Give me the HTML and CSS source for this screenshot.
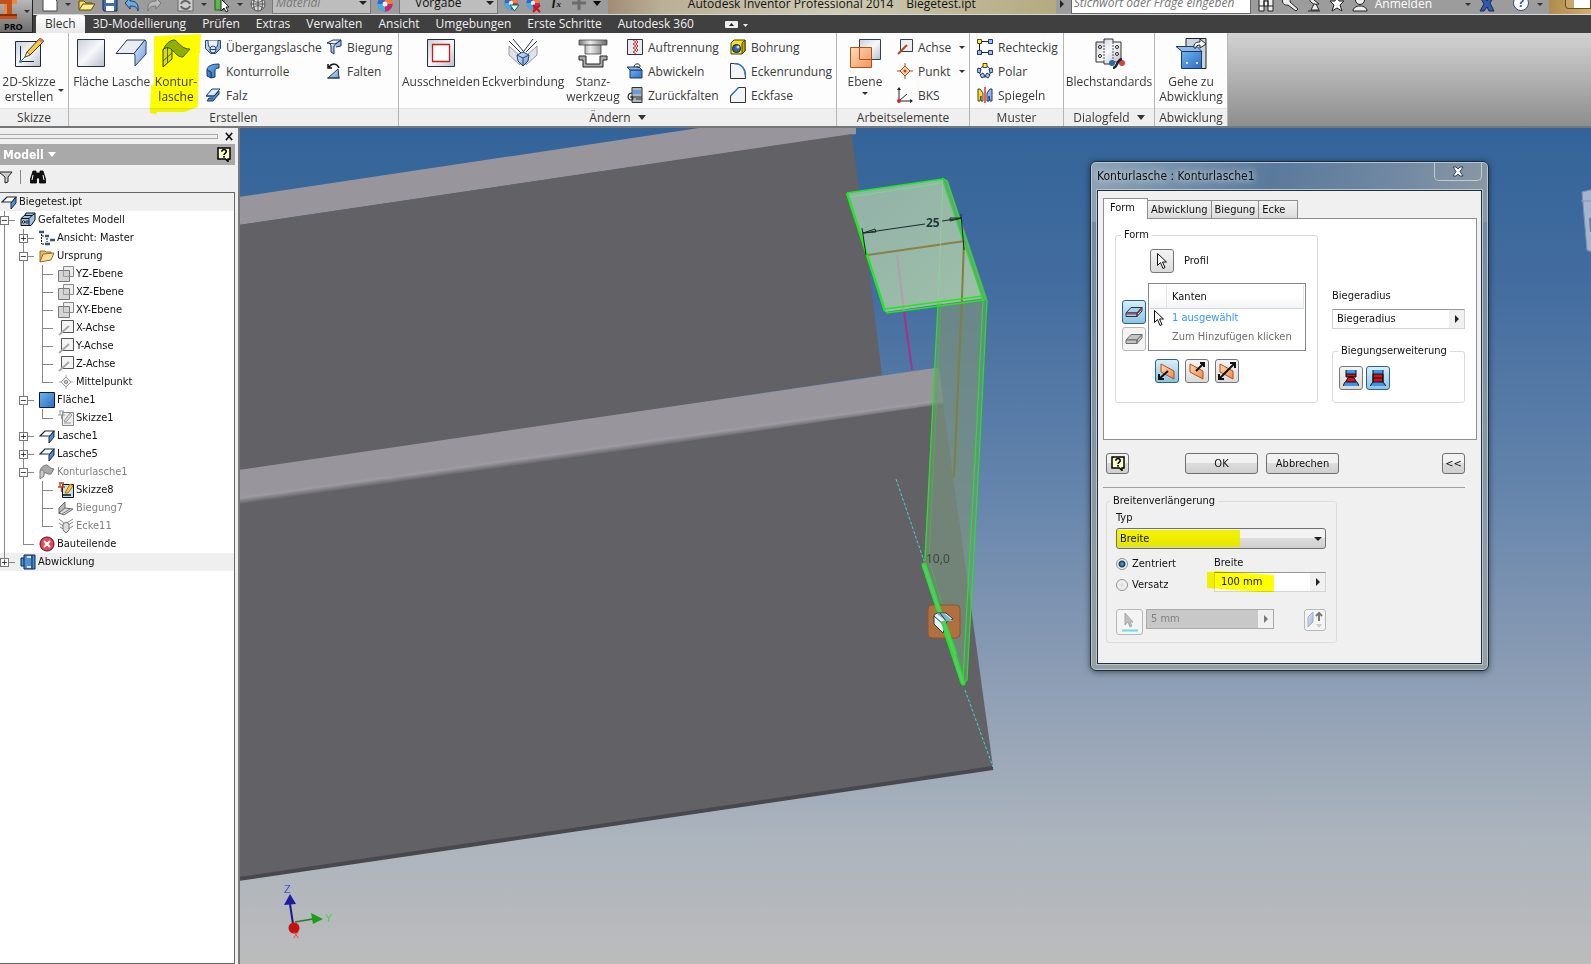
FILE: index.html
```html
<!DOCTYPE html>
<html lang="de">
<head>
  <meta charset="UTF-8">
  <meta name="viewport" content="width=device-width, initial-scale=1.0">
  <title>Autodesk Inventor Professional 2014 - Biegetest.ipt</title>
  <link rel="stylesheet" href="styles.css">
</head>
<body>
  <!-- shared icons -->
  <svg class="sprite" aria-hidden="true">
    <defs>
      <linearGradient id="steel" x1="0" y1="0" x2="1" y2="1"><stop offset="0" stop-color="#c9ced8"/><stop offset=".5" stop-color="#f6f8fa"/><stop offset="1" stop-color="#b9bfca"/></linearGradient>
      <linearGradient id="blue" x1="0" y1="0" x2="1" y2="1"><stop offset="0" stop-color="#dcebfa"/><stop offset="1" stop-color="#6d9ad6"/></linearGradient>
      <linearGradient id="deep" x1="0" y1="0" x2="1" y2="1"><stop offset="0" stop-color="#6db4ee"/><stop offset="1" stop-color="#2f6cc0"/></linearGradient>
      <linearGradient id="orange" x1="0" y1="0" x2="1" y2="1"><stop offset="0" stop-color="#fcd9b8"/><stop offset="1" stop-color="#f08a48"/></linearGradient>
      <linearGradient id="punch" x1="0" x2="1"><stop offset="0" stop-color="#777"/><stop offset=".4" stop-color="#eee"/><stop offset="1" stop-color="#666"/></linearGradient>
    </defs>
    <symbol id="i-flange" viewBox="0 0 16 16"><path d="M1 8 6 3h9l-4 5z" fill="#fff" stroke="#1b2940" stroke-width="1.2"/><path d="M11 8l4-5v6l-5 6V9z" fill="url(#deep)" stroke="#1b2940"/></symbol>
    <symbol id="i-plane" viewBox="0 0 16 16"><path d="M5.500 .5h10v10h-10z" fill="#eee" stroke="#888"/><path d="M.5 4.500h11v11H.5z" fill="#ccc" fill-opacity=".8" stroke="#777"/><path d="M5.500 4.500v6h6" fill="none" stroke="#999"/></symbol>
    <symbol id="i-axis" viewBox="0 0 16 16"><path d="M3.500 .5h12v12h-12z" fill="#f4f4f4" stroke="#555"/><path d="M1 15 11 6" stroke="#aaa" stroke-width="2"/></symbol>
    <symbol id="i-cursor" viewBox="0 0 12 18"><path d="M1.500 1.500v12l3-3 2.500 6 2-1-2.500-5.500h4z" fill="#fff" stroke="#111"/></symbol>
    <symbol id="i-help" viewBox="0 0 14 15"><path d="M1 1h12v11h-2v2.500L8.500 12H1z" fill="#ffffc8" stroke="#000" stroke-width="1.500"/><path d="M4.800 4.700c0-3 4.600-2.700 4.400 0C9.100 6.300 7 6.300 7 8M7 9v1.700" fill="none" stroke="#000" stroke-width="1.600"/></symbol>
    <symbol id="i-wheel" viewBox="0 0 16 16"><circle cx="8" cy="8" r="7.500" fill="#3a63c8"/><path d="M8 8V.5A7.500 7.500 0 0 1 15.500 8z" fill="#f08030"/><path d="M8 8h7.500A7.500 7.500 0 0 1 8 15.500z" fill="#d02070"/><path d="M8 8v7.500A7.500 7.500 0 0 1 .5 8z" fill="#3fb0e0"/><circle cx="8" cy="8" r="2.500" fill="#eee"/></symbol>
    <symbol id="i-slab" viewBox="0 0 18 12"><path d="M1 7 6 1.500h11L12 7z" fill="currentColor" stroke="#333"/><path d="M1 7v3.500h11V7zM12 10.500 17 5V1.500L12 7z" fill="currentColor" stroke="#333"/></symbol>
    <symbol id="i-binoc" viewBox="0 0 16 14"><path d="M3 1h3v2h4V1h3l2.500 8v4H9.500V8h-3v5h-6V9z" fill="currentColor" stroke="#000" stroke-width=".8"/><path d="M3 5 2 10M13 5l1 5" stroke="#fff"/></symbol>
  </svg>

  <header class="head">
    <button class="app" aria-label="Inventor PRO">
      <svg width="24" height="22" viewBox="0 0 24 22"><path d="M0 0h17v4h-5v10h5v5H0v-5h4V4H0z" fill="#c4511c"/><path d="M4 4h3v10H4zM12 0h5v4h-5z" fill="#e88a45"/><path d="M0 14h17v2H0z" fill="#8a3008"/></svg>
      <span>PRO</span><i class="tri"></i>
    </button>
    <div class="quick">
      <div class="quick-tools">
        <button aria-label="Neu"><svg width="16" height="18" viewBox="0 0 16 18"><path d="M1 1h10l4 4v10H1z" fill="#fff" stroke="#444"/></svg></button><i class="tri"></i>
        <button aria-label="Öffnen"><svg width="18" height="18" viewBox="0 0 18 18"><path d="M1 13V5h5l2 2h6v3" fill="#f9dd6a" stroke="#5e4a00"/><path d="m1 14 4-6h12l-4 6z" fill="#fff28a" stroke="#5e4a00"/></svg></button>
        <button aria-label="Speichern"><svg width="16" height="18" viewBox="0 0 16 18"><path d="M1 2h14v13H2l-1-1z" fill="#3f6ea8" stroke="#14284a"/><path d="M4 2h8v5H4zM4 10h8v5H4z" fill="#fff"/></svg></button>
        <button aria-label="Rückgängig"><svg width="16" height="18" viewBox="0 0 16 18"><path d="m1 7 5-5v3c6 0 9 3 8 10-1-4-3-5-8-5v3z" fill="#6fa8e6" stroke="#173d70"/></svg></button>
        <button aria-label="Wiederholen"><svg width="16" height="18" viewBox="0 0 16 18"><path d="m15 7-5-5v3C4 5 1 8 2 15c1-4 3-5 8-5v3z" fill="#b9b9b9" stroke="#777"/></svg></button>
        <button class="far" aria-label="Aktualisieren"><svg width="17" height="18" viewBox="0 0 17 18"><path d="M1 3h15v12H1z" fill="#ccc" stroke="#666"/><path d="M4 8c2-5 8-3 9 0M13 10c-2 5-8 3-9 0" fill="none" stroke="#666" stroke-width="2"/></svg></button><i class="tri"></i>
        <button aria-label="Auswählen"><svg width="16" height="18" viewBox="0 0 16 18"><path d="M1 1h9v13H1z" fill="#62b54e" stroke="#1e5c14"/><path d="M7 3v12l3-3 2 4 2-1-2-4h3z" fill="#fff" stroke="#222"/></svg></button><i class="tri"></i>
        <button aria-label="Darstellung"><svg width="16" height="18" viewBox="0 0 16 18"><circle cx="8" cy="8" r="7" fill="#d8d8d8" stroke="#555"/><path d="M1 8h14M8 1v14M3 4c3 3 7 3 10 0M3 12c3-3 7-3 10 0M5 2c-2 4-2 8 0 12M11 2c2 4 2 8 0 12" fill="none" stroke="#555"/></svg></button>
        <span class="combo w100"><select aria-label="Material" class="italic"><option>Material</option></select></span>
        <button aria-label="Farbrad"><svg width="16" height="18" viewBox="0 0 16 18"><use href="#i-wheel" width="16" height="16"/></svg></button>
        <span class="combo w100"><select aria-label="Darstellungsvorgabe"><option>Vorgabe</option></select></span>
        <button aria-label="Anpassen"><svg width="16" height="18" viewBox="0 0 16 18"><use href="#i-wheel" width="14" height="14"/><path d="M6 9h9l-4.500 6z" fill="#cff" stroke="#067"/></svg></button>
        <button aria-label="Löschen"><svg width="16" height="18" viewBox="0 0 16 18"><use href="#i-wheel" width="14" height="14"/><path d="m7 9 7 7m0-7-7 7" stroke="#c11" stroke-width="2"/></svg></button>
        <button class="fx">f<sub>x</sub></button>
        <button aria-label="Hinzufügen"><svg width="16" height="18" viewBox="0 0 16 18"><path d="M8 0v14M1 7h14" stroke="#6c6c6c" stroke-width="3"/></svg></button><i class="tri dark"></i>
      </div>
      <div class="caption"><span>Autodesk Inventor Professional 2014</span><span>Biegetest.ipt</span></div>
      <div class="info">
        <i class="tri side"></i>
        <input type="text" aria-label="Suche" placeholder="Stichwort oder Frage eingeben">
        <svg width="16" height="18" viewBox="0 0 16 18"><path d="M1 1h5v14H1zM10 1h5v14h-5zM6 5h4v5H6z" fill="#eee" stroke="#222"/><path d="M1 10h5M10 10h5" stroke="#222"/></svg>
        <svg width="18" height="18" viewBox="0 0 18 18"><path d="M2 2c3-3 8 0 7 4l8 7-2 2-8-6C3 10 0 6 2 2z" fill="#eee" stroke="#222"/></svg>
        <svg width="16" height="18" viewBox="0 0 16 18"><path d="M3 0c0 7 5 9 10 8zM8 8l-3 6h8l-3-6M2 15h12" fill="#eee" stroke="#222"/></svg>
        <svg width="16" height="18" viewBox="0 0 16 18"><path d="m8 0 2 5h5l-4 4 2 6-5-3-5 3 2-6-4-4h5z" fill="#fff" stroke="#222"/></svg>
        <svg width="16" height="18" viewBox="0 0 16 18"><circle cx="8" cy="4" r="4.500" fill="#eee" stroke="#222"/><path d="M1 15c0-3 3-5 7-5s7 2 7 5z" fill="#eee" stroke="#222"/></svg>
        <a href="#">Anmelden</a><i class="tri"></i>
        <svg width="16" height="18" viewBox="0 0 16 18"><path d="M1 1h5l2 4 3-4h4l-4 6 4 8h-5l-2-4-3 4H1l4-7z" fill="#3458a8" stroke="#16295a"/></svg>
        <button class="round" aria-label="Hilfe">?</button><i class="tri"></i>
      </div>
      <div class="winctl"><span></span></div>
    </div>
    <nav class="tabs">
      <a class="active" href="#">Blech</a>
      <a href="#">3D-Modellierung</a>
      <a href="#">Prüfen</a>
      <a href="#">Extras</a>
      <a href="#">Verwalten</a>
      <a href="#">Ansicht</a>
      <a href="#">Umgebungen</a>
      <a href="#">Erste Schritte</a>
      <a href="#">Autodesk 360</a>
      <button aria-label="Minimieren"><svg width="24" height="10" viewBox="0 0 24 10"><rect x="1" y="2" width="13" height="7" rx="1" fill="#eee"/><path d="m5 7 2.500-3L10 7z" fill="#222"/><path d="M19 5h5l-2.500 3z" fill="#eee"/></svg></button>
    </nav>
  </header>

  <div class="ribbon">
    <section class="panel skizze">
      <div class="tools">
        <button class="big">
          <svg width="32" height="32" viewBox="0 0 32 32"><path d="M2.500 4.500h25v25h-25z" fill="url(#steel)" stroke="#1e2a3c"/><path d="M7.500 9v15.500H21" fill="none" stroke="#1e2a3c"/><path d="m8 24 12-12" stroke="#2a66b8"/><circle cx="7.500" cy="24.500" r="1.500" fill="#38c"/><path d="m12 20 2-5L27 1l4 3-14 14z" fill="#f6c945" stroke="#4a3508"/><path d="m12 20 2-5 3 3z" fill="#f5e6cc" stroke="#4a3508" stroke-width=".6"/><path d="m25 3 2-2 4 3-2 2z" fill="#e07a6a"/></svg>
          <span>2D-Skizze</span><span>erstellen</span>
        </button>
        <i class="tri corner"></i>
      </div>
      <h2>Skizze</h2>
    </section>

    <section class="panel erstellen">
      <div class="tools">
        <button class="big"><svg width="32" height="32" viewBox="0 0 32 32"><path d="M2.500 2.500h27v27h-27z" fill="url(#steel)" stroke="#222e4c"/></svg><span>Fläche</span></button>
        <button class="big"><svg width="32" height="32" viewBox="0 0 32 32"><path d="M1 16.500 12 3h18L19 16.500z" fill="#e9ecf1" stroke="#2a3550"/><path d="M19 16.500 30 3c2 1 1 4 1 6v8L20 29V18z" fill="url(#blue)" stroke="#23427c"/></svg><span>Lasche</span></button>
        <button class="big marked">
          <svg class="marker" viewBox="0 0 54 80" preserveAspectRatio="none"><path d="M5 2 52 0l-1 19h-1l-1 54-14 5H8l-1 2-6-1 1-28h3z" fill="#ffff00"/></svg>
          <svg width="32" height="32" viewBox="0 0 32 32"><path d="M3 13C6 7 9 3 15 3c5 4 7 9 15 9l-7 8c-7 0-8-6-13-8z" fill="#8fae00" stroke="#3c5a00"/><path d="M3 13c2-3 6-3 9 0v9l-9 8z" fill="#d8e000" stroke="#2c4400"/><path d="m3 24 9-8M7.500 11v15" stroke="#2c4400" stroke-width=".8"/></svg>
          <span>Kontur-</span><span>lasche</span>
        </button>
        <div class="list">
          <button><svg width="16" height="16" viewBox="0 0 16 16"><path d="M.5 1.500h15v8l-5 5h-5l-5-5z" fill="url(#blue)" stroke="#23427c"/><path d="M3 1.500c0 7 2 8 5 8s5-1 5-8" fill="#eef4fb" stroke="#23427c"/><ellipse cx="8" cy="10.500" rx="3" ry="3.500" fill="#dcebfa" stroke="#23427c"/><path d="M5 10.500h6" stroke="#23427c"/></svg>Übergangslasche</button>
          <button><svg width="16" height="16" viewBox="0 0 16 16"><path d="M2 7c0-4 5-6 12-6v4c-3 0-4 1-4 3v6l-4 1V9z" fill="url(#deep)" stroke="#1d3868"/><path d="M2 7v6l4 2V9z" fill="#4c7fc4" stroke="#1d3868"/></svg>Konturrolle</button>
          <button><svg width="16" height="16" viewBox="0 0 16 16"><path d="m1 9 6-7h8l-6 7z" fill="#dcebfa" stroke="#1d3868"/><path d="M1 9h8l5-5v3l-6 7H2l2-3h4" fill="url(#deep)" stroke="#1d3868"/></svg>Falz</button>
        </div>
        <div class="list">
          <button><svg width="16" height="16" viewBox="0 0 16 16"><path d="m1 4 6-3h8L9 5z" fill="#eef3fa" stroke="#1d3868"/><path d="M1 4c3 0 4 1 4 4v5l3 2V8c0-2 1-3 2-3l5-4v6l-5 1" fill="url(#blue)" stroke="#1d3868"/></svg>Biegung</button>
          <button><svg width="16" height="16" viewBox="0 0 16 16"><path d="m2 15 10-9 1 9z" fill="url(#blue)" stroke="#1d3868"/><path d="M13 5C11 0 6 0 3 4M2 1v4h4" fill="none" stroke="#111" stroke-width="1.500"/><path d="M1 15h13" stroke="#1d3868"/></svg>Falten</button>
        </div>
      </div>
      <h2>Erstellen</h2>
    </section>

    <section class="panel aendern">
      <div class="tools">
        <button class="big"><svg width="32" height="32" viewBox="0 0 32 32"><path d="M2.500 2.500h27v27h-27z" fill="url(#steel)" stroke="#222e4c"/><path d="M7.500 7.500h17v17h-17z" fill="#fff" stroke="#d01818" stroke-width="1.300"/></svg><span>Ausschneiden</span></button>
        <button class="big"><svg width="32" height="32" viewBox="0 0 32 32"><path d="M2 9 13 19v9L2 18zM30 9 19 19v9l11-10z" fill="#dfe2e8" stroke="#999"/><path d="m2 4 12 12M6 2l11 13M30 4 19 15M26 2l-9 12" stroke="#2a3550"/><path d="m10 18 6-3 6 3-1 6-5 5-5-5z" fill="url(#blue)" stroke="#23427c"/><path d="m10 18 6 3 6-3M16 21v8" fill="none" stroke="#23427c"/></svg><span>Eckverbindung</span></button>
        <button class="big"><svg width="32" height="32" viewBox="0 0 32 32"><path d="M2 3h28v5h-6v9H8V8H2z" fill="url(#punch)" stroke="#444" stroke-width=".8"/><path d="M8 8h16" stroke="#444"/><path d="M2 19h7v8h14v-8h7v4h-4v7H6v-7H2z" fill="#aaa" stroke="#222"/></svg><span>Stanz-</span><span>werkzeug</span></button>
        <div class="list">
          <button><svg width="16" height="16" viewBox="0 0 16 16"><path d="M.5.500h15v15H.5z" fill="#e8ebf0" stroke="#333"/><path d="m6 1 3 2-3 2 3 2-3 2 3 2-3 2 3 2M9 1l2 2-2 2 2 2-2 2 2 2-2 2" fill="none" stroke="#d22"/></svg>Auftrennung</button>
          <button><svg width="16" height="16" viewBox="0 0 16 16"><path d="M3 7h12v8H3z" fill="url(#deep)" stroke="#1d3868"/><path d="m0 4 3 3h12l-3-3z" fill="#8fb8e8" stroke="#1d3868"/><path d="M7 4c0-4 6-4 6-1 0 2-3 2-3 0" fill="none" stroke="#222"/></svg>Abwickeln</button>
          <button><svg width="16" height="16" viewBox="0 0 16 16"><path d="M5 .5h10v15H5z" fill="#aeb6c2" stroke="#333"/><path d="M6 3h8v4H6z" fill="#6d9ad6"/><path d="M3 10h12M9 12h6" stroke="#333"/><path d="M5 6C0 6 0 13 4 13c3 0 2-4 0-3" fill="none" stroke="#222" stroke-width="1.200"/></svg>Zurückfalten</button>
        </div>
        <div class="list">
          <button><svg width="16" height="16" viewBox="0 0 16 16"><path d="m1 4 3-3h11v11l-3 3H1z" fill="#f8e028" stroke="#4a4200"/><path d="M12 4v11l3-3V1z" fill="#c8a800" stroke="#4a4200"/><circle cx="6.500" cy="9.500" r="4" fill="#3a62a8" stroke="#122"/><circle cx="8" cy="8" r="1.500" fill="#cde"/></svg>Bohrung</button>
          <button><svg width="16" height="16" viewBox="0 0 16 16"><path d="M.5 15.500V.5h4c7 0 11 5 11 15z" fill="#f2f4f8" stroke="#333"/><path d="M4 .5c8 0 11.500 6 11.500 12" fill="none" stroke="#2a78c8" stroke-width="1.400"/></svg>Eckenrundung</button>
          <button><svg width="16" height="16" viewBox="0 0 16 16"><path d="M.5 15.500V9l8-8.500h7v15z" fill="#f2f4f8" stroke="#333"/><path d="m.5 9 8-8.500" stroke="#2a78c8" stroke-width="1.400"/></svg>Eckfase</button>
        </div>
      </div>
      <h2>Ändern <i class="tri"></i></h2>
    </section>

    <section class="panel arbeit">
      <div class="tools">
        <button class="big"><svg width="32" height="32" viewBox="0 0 32 32"><path d="M10.500 2.500h21v20h-21z" fill="url(#steel)" stroke="#333f55"/><path d="M1.500 10.500h21v20h-21z" fill="url(#orange)" fill-opacity=".9" stroke="#b35010"/><path d="M10.500 10.500v12h12" fill="none" stroke="#b35010"/></svg><span>Ebene</span><i class="tri"></i></button>
        <div class="list">
          <button><svg width="16" height="16" viewBox="0 0 16 16"><path d="M3.500 .5h12v12h-12z" fill="#eceef2" stroke="#333f55"/><path d="m1 15 9-9" stroke="#b04a18" stroke-width="2"/></svg>Achse<i class="tri"></i></button>
          <button><svg width="16" height="16" viewBox="0 0 16 16"><path d="m8 3 5 5-5 5-5-5z" fill="#fbd0a8" stroke="#b04a18"/><path d="M8 0v4m0 8v4M0 8h4m8 0h4" stroke="#b04a18"/><circle cx="8" cy="8" r="1.500" fill="#b04a18"/></svg>Punkt<i class="tri"></i></button>
          <button><svg width="16" height="16" viewBox="0 0 16 16"><path d="M2 14V1M2 14h13M2 14l8-7" stroke="#222" fill="none"/><path d="m0 3 2-3 2 3zM13 12l3 2-3 2z" fill="#222"/><circle cx="2" cy="14" r="2" fill="#d22"/></svg>BKS</button>
        </div>
      </div>
      <h2>Arbeitselemente</h2>
    </section>

    <section class="panel muster">
      <div class="tools">
        <div class="list">
          <button><svg width="16" height="16" viewBox="0 0 16 16"><path d="M2.500 4v8M5 2.500h6M5 13.500h6" stroke="#222"/><path d="M.5.500h4v4h-4z" fill="#fe3" stroke="#443"/><path d="M11.500.500h4v4h-4zM.5 11.500h4v4h-4zM11.500 11.500h4v4h-4z" fill="#9cc2f5" stroke="#1d3868"/></svg>Rechteckig</button>
          <button><svg width="16" height="16" viewBox="0 0 16 16"><circle cx="8" cy="8.500" r="5.500" fill="none" stroke="#1d3868"/><path d="M6 .5h4v4H6z" fill="#fe3" stroke="#443"/><path d="m1 5 3 1-1 4-3-1zM15 5l-3 1 1 4 3-1zM3 12l3-2 2 3-3 2zM13 12l-3-2-2 3 3 2z" fill="#9cc2f5" stroke="#1d3868"/></svg>Polar</button>
          <button><svg width="16" height="16" viewBox="0 0 16 16"><path d="M1 2h2l3 4v8H4V9L3 14H1z" fill="#fd2" stroke="#443"/><path d="M15 2h-2l-3 4v8h2V9l1 5h2z" fill="#8fb8f0" stroke="#1d3868"/><path d="M8 0v16" stroke="#d22" stroke-width="1.400"/></svg>Spiegeln</button>
        </div>
      </div>
      <h2>Muster</h2>
    </section>

    <section class="panel dialogfeld">
      <div class="tools">
        <button class="big"><svg width="32" height="32" viewBox="0 0 32 32"><path d="M3 5h8V2h9v3h8v20h-8v2h-9v-2H3z" fill="url(#steel)" stroke="#333"/><path d="M11 5v20M20 5v20" stroke="#555" stroke-dasharray="2 1"/><g fill="#fff" stroke="#222"><circle cx="7" cy="10" r="1.500"/><circle cx="7" cy="19" r="1.500"/><circle cx="24" cy="10" r="1.500"/><circle cx="24" cy="17" r="1.500"/></g><circle cx="19" cy="26" r="3" fill="#2a6a9c"/><circle cx="29" cy="26" r="3" fill="#d8403a"/><path d="M20 31c5 0 3-8 9-9" fill="none" stroke="#223" stroke-width="2.500"/></svg><span>Blechstandards</span></button>
      </div>
      <h2>Dialogfeld <i class="tri"></i></h2>
    </section>

    <section class="panel abwicklung">
      <div class="tools">
        <button class="big"><svg width="32" height="32" viewBox="0 0 32 32"><path d="M11 1.500h20v30H11z" fill="#c9d3e2" stroke="#222"/><path d="M6.500 14.500h20v17h-20z" fill="url(#deep)" stroke="#1d3868"/><path d="m1 9.500 6 5h20l-5-5z" fill="#8fb8e8" stroke="#1d3868"/><path d="M19 11c-1-5 3-6 6-6V2l6 5-6 4V8c-3 0-4 1-4 3z" fill="#fff" stroke="#222"/><circle cx="12" cy="26" r="1" fill="#fff"/><circle cx="22" cy="26" r="1" fill="#fff"/></svg><span>Gehe zu</span><span>Abwicklung</span></button>
      </div>
      <h2>Abwicklung</h2>
    </section>
  </div>

  <main class="work">
    <aside class="browser">
      <div class="grip"><span></span><button aria-label="Schließen">×</button></div>
      <div class="browser-title"><b>Modell</b><i class="tri"></i><button aria-label="Hilfe"><svg width="14" height="15"><use href="#i-help"/></svg></button></div>
      <div class="browser-tools">
        <button aria-label="Filter"><svg width="13" height="13" viewBox="0 0 13 13"><path d="M-1 1h13L8 6v5l-3 1V6z" fill="#ccc" stroke="#222"/></svg></button>
        <button aria-label="Suchen"><svg width="16" height="14" color="#111"><use href="#i-binoc"/></svg></button>
      </div>
      <div class="tree">
        <div class="row root"><svg width="16" height="16"><use href="#i-flange"/></svg>Biegetest.ipt</div>
        <ul>
          <li>
            <div class="row"><span class="node"><button>−</button></span><svg width="16" height="16" viewBox="0 0 16 16"><path d="M1 6.500 5 3l1-2h9v7l-4 5.500H1z" fill="#9cc4ec" stroke="#111"/><path d="M1 6.500h8l3-3M9 6.500V13M5 3.500h7l3-2" stroke="#111" fill="none"/><circle cx="3.500" cy="10" r="1.200" fill="#fff" stroke="#111"/><circle cx="7" cy="10" r="1.200" fill="#fff" stroke="#111"/></svg>Gefaltetes Modell</div>
            <ul>
              <li><div class="row"><span class="node"><button>+</button></span><svg width="16" height="16" viewBox="0 0 16 16"><path d="M0 2h5M11 10h5M6 6h4M6 14h5" stroke="#357" stroke-width="2.500"/><path d="M2.500 4v10M3 6h2M3 14h2M8 8v4" stroke="#111" stroke-dasharray="2 1"/></svg>Ansicht: Master</div></li>
              <li>
                <div class="row"><span class="node"><button>−</button></span><svg width="16" height="16" viewBox="0 0 16 16"><path d="M1 14V3h5l1 1h5v3" fill="#e9bd68" stroke="#9a6a20"/><path d="m1 14 3-8 11-1-3 7z" fill="#fbdc98" stroke="#9a6a20"/></svg>Ursprung</div>
                <ul>
                  <li><div class="row"><span class="node"></span><svg width="16" height="16"><use href="#i-plane"/></svg>YZ-Ebene</div></li>
                  <li><div class="row"><span class="node"></span><svg width="16" height="16"><use href="#i-plane"/></svg>XZ-Ebene</div></li>
                  <li><div class="row"><span class="node"></span><svg width="16" height="16"><use href="#i-plane"/></svg>XY-Ebene</div></li>
                  <li><div class="row"><span class="node"></span><svg width="16" height="16"><use href="#i-axis"/></svg>X-Achse</div></li>
                  <li><div class="row"><span class="node"></span><svg width="16" height="16"><use href="#i-axis"/></svg>Y-Achse</div></li>
                  <li><div class="row"><span class="node"></span><svg width="16" height="16"><use href="#i-axis"/></svg>Z-Achse</div></li>
                  <li><div class="row"><span class="node"></span><svg width="16" height="16" viewBox="0 0 16 16"><path d="m8 3 5 5-5 5-5-5z" fill="#eee" stroke="#999"/><path d="M8 1v3m0 8v3M1 8h3m8 0h3" stroke="#aaa"/><circle cx="8" cy="8" r="1.500" fill="none" stroke="#777"/></svg>Mittelpunkt</div></li>
                </ul>
              </li>
              <li>
                <div class="row"><span class="node"><button>−</button></span><svg width="16" height="16" viewBox="0 0 16 16"><path d="M.5.500h15v15H.5z" fill="url(#deep)" stroke="#0b1c38"/></svg>Fläche1</div>
                <ul>
                  <li><div class="row"><span class="node"></span><svg width="16" height="16" viewBox="0 0 16 16"><path d="M4.500 2.500h11v13h-11z" fill="#eee" stroke="#888"/><path d="m6 11 6-8 2 2-6 7z" fill="#ddd" stroke="#999"/><path d="M1 1h5M2 1v4M5 1v4M0 5h7M3.500 5v4M6 13h7" stroke="#999" fill="none"/></svg>Skizze1</div></li>
                </ul>
              </li>
              <li><div class="row"><span class="node"><button>+</button></span><svg width="16" height="16"><use href="#i-flange"/></svg>Lasche1</div></li>
              <li><div class="row"><span class="node"><button>+</button></span><svg width="16" height="16"><use href="#i-flange"/></svg>Lasche5</div></li>
              <li>
                <div class="row dim"><span class="node"><button>−</button></span><svg width="16" height="16" viewBox="0 0 16 16"><path d="M1 7c1-4 4-6 7-6 3 2 4 4 7 4l-3 5c-4 1-4-2-7-1z" fill="#aaa" stroke="#777"/><path d="M1 7c2-2 3-1 4 1v4l-4 3z" fill="#ccc" stroke="#777"/></svg>Konturlasche1</div>
                <ul>
                  <li><div class="row"><span class="node"></span><svg width="16" height="16" viewBox="0 0 16 16"><path d="M4.500 2.500h11v13h-11z" fill="#bfe0fa" stroke="#111"/><path d="m7 11 5-9 3 2-5 7z" fill="#fc2" stroke="#a70"/><path d="M5 13h8" stroke="#111" stroke-width="1.500"/><path d="M1 1h5M2 1v4M5 1v4M0 5h7M3.500 5v5" stroke="#c3401c" stroke-width="1.300"/></svg>Skizze8</div></li>
                  <li><div class="row dim"><span class="node"></span><svg width="16" height="16" viewBox="0 0 16 16"><path d="m1 8 6-6v6l-6 6z" fill="#bbb" stroke="#666"/><path d="m1 13 6-5 8 1-9 6z" fill="#ddd" stroke="#666"/><path d="m4 14 8-5" stroke="#777"/></svg>Biegung7</div></li>
                  <li><div class="row dim"><span class="node"></span><svg width="16" height="16" viewBox="0 0 16 16"><path d="m1 1 6 5 8-5M1 5l6 4 8-5M2 9l5 3M15 8l-6 4" stroke="#888" fill="none"/><path d="m5 6 3-2 3 2v6l-3 3-3-3z" fill="#ddd" stroke="#777"/></svg>Ecke11</div></li>
                </ul>
              </li>
              <li><div class="row"><span class="node"></span><svg width="16" height="16" viewBox="0 0 16 16"><circle cx="8" cy="8" r="7" fill="#e04a58" stroke="#5a1018"/><path d="m5 5 6 6m0-6-6 6" stroke="#fff" stroke-width="2"/></svg>Bauteilende</div></li>
            </ul>
          </li>
          <li class="shade"><div class="row"><span class="node"><button>+</button></span><svg width="16" height="16" viewBox="0 0 16 16"><path d="M1 4h3V1h11v14H4v-3H1z" fill="#4f8fd0" stroke="#0d2548"/><path d="M4 4v8M12 1v14" stroke="#0d2548"/><path d="M7 2h4v2H7zM7 12h4v2H7z" fill="#cfe4f8"/></svg>Abwicklung</div></li>
        </ul>
      </div>
    </aside>

    <div class="viewport">
      <svg class="scene" viewBox="240 128 1351 836" preserveAspectRatio="xMinYMin slice">
        <defs>
          <linearGradient id="lip" gradientUnits="userSpaceOnUse" x1="590" y1="419" x2="595" y2="455"><stop offset="0" stop-color="#98969c"/><stop offset=".76" stop-color="#98969c"/><stop offset=".83" stop-color="#9e9ca2"/><stop offset="1" stop-color="#626166"/></linearGradient>
          <linearGradient id="cap" x1="0" y1="0" x2="1" y2="1"><stop offset="0" stop-color="#94b3aa"/><stop offset="1" stop-color="#a2c3a8"/></linearGradient>
        </defs>
        <!-- rear leg -->
        <path d="M239 197 699 128h157v6L239 225z" fill="#98969c"/>
        <path d="M239 225 852 134l30 241-643 97z" fill="#626166"/>
        <path d="M904 312l8 58" stroke="#a8308a" stroke-width="2"/>
        <!-- front leg -->
        <path d="M239 470 935 368l4 0 5 38-705 104z" fill="url(#lip)"/>
        <path d="M239 507 943 404l50 363-754 112z" fill="#626166"/>
        <path d="M239 879 993 768" stroke="#48484e" stroke-width="4"/>
        <!-- flange preview -->
        <path d="M938 303l49-5-20 382-4 4-39-121z" fill="#789080" fill-opacity=".72"/>
        <path d="M847 193 943 179l42 119-100 14z" fill="url(#cap)" fill-opacity=".97"/>
        <path d="M943 179l5 2 39 117-4 2z" fill="#6f9a84"/>
        <path d="M897 255l7 55" stroke="#b0a0a8" stroke-width="2"/>
        <path d="M868 255 965 241" stroke="#8c8048" stroke-width="2"/>
        <path d="M964 241l-2 56-8 180" stroke="#80803e" stroke-width="2" fill="none"/>
        <path d="M943 180 938 303" stroke="#8ae08a" fill="none" opacity=".6"/>
        <path d="M938 303 925 560M943 181l40 119-8 160-12 218M942 178l5 3 38 116 2 4-8 159-12 220-4 4-40-119" fill="none" stroke="#1ee81e" stroke-width="1.200"/>
        <path d="M941 303 929 560l32 108" fill="none" stroke="#48b848" stroke-width=".8"/>
        <path d="M847 193 943 179M885 309 983 296M886 313l99-13" fill="none" stroke="#1ee81e" stroke-width="1.300"/>
        <path d="M850 197l92-14" stroke="#7ad88a"/>
        <path d="M847 193l38 118" stroke="#1ee81e" stroke-width="2.500"/>
        <!-- dimension -->
        <path d="M863 233 925 224M942 221l20-3M862 228l4 27M961 214l3 36" stroke="#1c2c28" fill="none"/>
        <path d="m863 233 12-4 1 3zM962 218l-12 0 0 3z" fill="none" stroke="#1c2c28"/>
        <text x="926" y="227" class="dim-text">25</text>
        <text x="926" y="563" class="dim-text faint">10,0</text>
        <!-- bend line and drag handle -->
        <path d="M896 479l28 82M965 690l28 77" stroke="#3fd8d0" stroke-dasharray="3 2"/>
        <rect x="928" y="605" width="32" height="33" rx="4" fill="#b0713f" stroke="#8c5428"/>
        <path d="M924 565 963 683" stroke="#1ee81e" stroke-width="5" stroke-linecap="round"/>
        <path d="M924 565 963 683" stroke="#6fb98c" stroke-width="2"/>
        <path d="M934 615l3-2h9l7 6-6 2-4 12-9-9z" fill="#e8f2f8" stroke="#28404c"/>
        <path d="M937 614h8l8 7h-7z" fill="#7cb4d0"/><path d="m934 616 10 9M940 613l6 8" stroke="#28404c"/>
        <path d="M943 621 955 655" stroke="#1ee81e" stroke-width="5"/><path d="M943 621 955 655" stroke="#6fb98c" stroke-width="2"/>
        <!-- view cube edge -->
        <path d="M1582 192l12-3v64l-7-3z" fill="#a3b5d0" stroke="#7a90b4"/><path d="M1581 201h12" stroke="#8296b8"/><path d="M1589 218h4v14h-3z" fill="#66799c"/>
        <!-- axis triad -->
        <path d="M293 924l-3-20" stroke="#1a1a8c" stroke-width="2"/><path d="m284 905 6-11 6 10z" fill="#1c1c9c"/>
        <path d="m295 922 18-3" stroke="#2c7a2c" stroke-width="1.500"/><path d="m311 913 12 6-10 5z" fill="#18a018"/>
        <circle cx="294" cy="928" r="5.500" fill="#c81010"/>
        <text x="284" y="893" fill="#4a4ad8" class="axis-text">Z</text>
        <text x="325" y="922" fill="#4ad04a" class="axis-text">Y</text>
        <text x="293" y="938" fill="#f04040" class="axis-text small">X</text>
      </svg>

      <section class="dialog" role="dialog" aria-label="Konturlasche">
        <header><h1>Konturlasche : Konturlasche1</h1><button class="close" aria-label="Schließen"><svg width="12" height="11" viewBox="0 0 12 11"><path d="M1 1h3l2 2 2-2h3L8 5.500 11 10H8L6 8l-2 2H1l3-4.500z" fill="#fff" stroke="#34465a"/></svg></button></header>
        <form class="dialog-body">
          <div class="dtabs">
            <button type="button" class="active">Form</button>
            <button type="button">Abwicklung</button>
            <button type="button">Biegung</button>
            <button type="button">Ecke</button>
          </div>
          <div class="page">
            <fieldset class="form-box">
              <legend>Form</legend>
              <div class="profile"><button type="button" class="tool" id="profil"><svg width="12" height="18"><use href="#i-cursor"/></svg></button><label for="profil">Profil</label></div>
              <div class="edges">
                <div class="side-tools">
                  <button type="button" class="tool on" aria-label="Kanten"><svg width="18" height="12" color="#9ad0f0" viewBox="0 0 18 12"><use href="#i-slab"/><path d="M1 8h11l5-5" stroke="#d22" fill="none"/></svg></button>
                  <button type="button" class="tool off" aria-label="Flächenkanten"><svg width="18" height="12" color="#b0b0b0"><use href="#i-slab"/></svg></button>
                </div>
                <table>
                  <thead><tr><th></th><th>Kanten</th></tr></thead>
                  <tbody>
                    <tr><td rowspan="2"><svg width="12" height="18"><use href="#i-cursor"/></svg></td><td class="picked">1 ausgewählt</td></tr>
                    <tr><td class="hint">Zum Hinzufügen klicken</td></tr>
                  </tbody>
                </table>
              </div>
              <div class="modes">
                <button type="button" class="tool on" aria-label="Seite 1"><svg width="18" height="18" viewBox="0 0 18 18"><path d="m3 2 13 7v8L3 10z" fill="url(#orange)" stroke="#b35010"/><path d="m1 17 9-8M1 12v5h5" stroke="#111" stroke-width="2" fill="none"/></svg></button>
                <button type="button" class="tool" aria-label="Seite 2"><svg width="18" height="18" viewBox="0 0 18 18"><path d="m2 2 13 7v8L2 10z" fill="url(#orange)" stroke="#b35010"/><path d="m8 9 8-8M12 1h4v4" stroke="#111" stroke-width="2" fill="none"/></svg></button>
                <button type="button" class="tool" aria-label="Mitte"><svg width="18" height="18" viewBox="0 0 18 18"><path d="m2 2 13 7v8L2 10z" fill="url(#orange)" stroke="#b35010"/><path d="M1 17 17 1M1 12v5h5M12 1h5v5" stroke="#111" stroke-width="2" fill="none"/></svg></button>
              </div>
            </fieldset>
            <div class="radius">
              <label for="radius">Biegeradius</label>
              <div class="field"><input id="radius" type="text" value="Biegeradius"><button type="button" aria-label="Mehr"><i class="tri side"></i></button></div>
              <fieldset class="extend">
                <legend>Biegungserweiterung</legend>
                <button type="button" class="tool" aria-label="Ausgerichtet"><svg width="16" height="16" viewBox="0 0 16 16"><path d="M3 0h10v4H3z" fill="#3a94f0"/><path d="M0 16l4-6h8l4 6z" fill="#3a94f0"/><path d="M3 4h10v3H3zM5.500 7h5l3 5h-11z" fill="#d21414" stroke="#111"/><path d="M3 0v4M13 0v4M2 12l-2 4M14 12l2 4" stroke="#111"/></svg></button>
                <button type="button" class="tool on" aria-label="Rechtwinklig"><svg width="16" height="16" viewBox="0 0 16 16"><path d="M3 0h10v4H3zM0 16l3-4h10l3 4z" fill="#3a94f0"/><path d="M3 4h10v8H3z" fill="#d21414" stroke="#111"/><path d="M3 8h10M3 0v12l-3 4M13 0v12l3 4" stroke="#111" fill="none"/></svg></button>
              </fieldset>
            </div>
          </div>
          <div class="actions">
            <button type="button" class="sq" aria-label="Hilfe"><svg width="14" height="15"><use href="#i-help"/></svg></button>
            <div><button type="submit">OK</button><button type="button">Abbrechen</button></div>
            <button type="button" class="sq">&lt;&lt;</button>
          </div>
          <hr>
          <fieldset class="width-box">
            <legend>Breitenverlängerung</legend>
            <label for="typ">Typ</label>
            <span class="combo type"><select id="typ"><option>Breite</option></select></span>
            <div class="options">
              <div class="radios">
                <label><input type="radio" name="lage" checked>Zentriert</label>
                <label><input type="radio" name="lage">Versatz</label>
              </div>
              <div class="breite">
                <label for="breite">Breite</label>
                <div class="field marked"><input id="breite" type="text" value="100 mm"><button type="button" aria-label="Mehr"><i class="tri side"></i></button>
                  <svg class="marker" viewBox="0 0 68 22" preserveAspectRatio="none"><path d="M0 1l8 0 0-1 59 4v17l-14 0-53-4z" fill="#ffff00"/></svg>
                </div>
              </div>
            </div>
            <div class="offset">
              <button type="button" class="tool off" aria-label="Versatz wählen"><svg width="18" height="20" viewBox="0 0 18 20"><path d="M4 1v12l3-3 2 5 2-1-2-4h3z" fill="#aaa" stroke="#888"/><path d="M1 18.500h16" stroke="#2bd5dc" stroke-width="2"/></svg></button>
              <div class="field off"><input type="text" aria-label="Versatzwert" value="5 mm" disabled><button type="button" disabled aria-label="Mehr"><i class="tri side"></i></button></div>
              <button type="button" class="tool off" aria-label="Richtung umkehren"><svg width="16" height="18" viewBox="0 0 16 18"><path d="m1 6 5-5v10l-5 5z" fill="url(#blue)" stroke="#7a92b0"/><path d="M12 10V2M9 5l3-3 3 3" stroke="#444" stroke-width="2" fill="none"/><path d="M9 13h6l-3 4z" fill="#bbb"/></svg></button>
            </div>
          </fieldset>
        </form>
      </section>
    </div>
  </main>
</body>
</html>
```
FILE: styles.css
```css
* {
  box-sizing: border-box;
}
body {
  margin: 0;
  height: 100vh;
  display: flex;
  flex-direction: column;
  overflow: hidden;
  font-family: "DejaVu Sans Condensed", "Noto Sans", sans-serif;
  font-size: 11px;
  line-height: 14px;
  color: #111;
}
button, input, select {
  font: inherit;
  color: inherit;
  margin: 0;
}
button {
  padding: 0;
  border: 0;
  background: none;
}
a {
  color: inherit;
  text-decoration: none;
}
svg {
  display: block;
  flex: none;
}
h1, h2, ul {
  margin: 0;
  padding: 0;
  font-weight: normal;
}
fieldset {
  margin: 0;
  min-width: 0;
  padding: 0;
  border: 1px solid #d5dadd;
  border-radius: 3px;
}
.sprite {
  position: absolute;
  width: 0;
  height: 0;
}

/* small arrows */
.tri {
  flex: none;
  width: 0;
  height: 0;
  border: 3px solid transparent;
  border-top: 3px solid #333;
  border-bottom: 0;
}
.tri.dark {
  border-width: 5px 4px 0;
  border-top-color: #000;
}
.tri.side {
  border: 4px solid transparent;
  border-left: 4px solid #222;
  border-right: 0;
}

/* title bar */
.head {
  display: grid;
  grid-template-columns: 33px 1fr;
  grid-template-rows: 15px 18px;
  background: #404040;
  font-family: "Open Sans", "Noto Sans", sans-serif;
  font-size: 12px;
}
.app {
  grid-row: 1 / 3;
  position: relative;
  background: linear-gradient(#b8b8b8, #6e6e6e);
  border-right: 1px solid #222;
  border-bottom: 1px solid #222;
  text-align: left;
}
.app span {
  display: block;
  padding-left: 4px;
  font-size: 9px;
  font-weight: bold;
  line-height: 10px;
  color: #000;
}
.app .tri {
  position: absolute;
  right: 2px;
  top: 10px;
}
.quick {
  display: flex;
  overflow: hidden;
  background: #9c9c9c;
  border-bottom: 1px solid #d8d8d8;
}
.quick-tools, .info {
  display: flex;
  align-items: flex-end;
}
.quick-tools {
  padding: 0 6px 0 9px;
  gap: 6px;
}
.quick .tri:not(.side) {
  margin: 0 1px 8px;
}
.quick .tri.dark {
  margin-left: 0;
}
.quick .tri.side {
  margin-bottom: 6px;
}
.quick .far {
  margin-left: 9px;
}
.combo {
  position: relative;
  display: inline-block;
}
.combo::after {
  content: "";
  position: absolute;
  right: 4px;
  top: 50%;
  border: 4px solid transparent;
  border-top: 4px solid #222;
  border-bottom: 0;
  margin-top: -2px;
  pointer-events: none;
}
.combo select {
  width: 100%;
  appearance: none;
  border: 1px solid #777;
  border-radius: 0;
}
.w100 {
  width: 99px;
}
.w100 select {
  height: 22px;
  padding: 0 0 0 3px;
  background: #bdbdbd;
  display: block;
}
.w100 + button + .w100 select {
  padding-left: 15px;
}
.w100 .italic {
  font-style: italic;
  color: #777;
}
.fx {
  width: 17px;
  font: italic bold 14px/20px "Liberation Serif", serif;
}
.fx sub {
  font-size: 9px;
  vertical-align: -2px;
}
.caption {
  flex: 1;
  display: flex;
  align-items: flex-end;
  justify-content: center;
  gap: 13px;
  line-height: 20px;
  white-space: nowrap;
  color: #111;
  background: linear-gradient(90deg, #a08c74, #b9b095 12%, #cfcab4 50%, #b3aa80);
}
.info {
  gap: 7px;
  padding: 0 5px 0 4px;
  color: #fff;
  line-height: 20px;
}
.info input {
  width: 180px;
  height: 22px;
  padding: 0 2px 2px;
  border: 1px solid #666;
  font-style: italic;
  color: #666;
  background: #fff;
}
.info a {
  margin-right: 25px;
}
.round {
  width: 16px;
  height: 16px;
  margin: 0 0 3px 11px;
  border: 1px solid #2a4a90;
  border-radius: 50%;
  background: #fff;
  color: #1c4aa8;
  font-weight: bold;
  line-height: 14px;
}
.winctl {
  width: 42px;
  padding-left: 16px;
  background: linear-gradient(90deg, #b08b4c, #d0b070);
}
.winctl span {
  display: block;
  height: 9px;
  border: 1px solid #6a4c1c;
  border-top: 0;
  border-radius: 0 0 0 4px;
  background: linear-gradient(90deg, #c6a870 35%, #fff 35%);
}
.tabs {
  display: flex;
  padding-left: 3px;
  color: #f0f0f0;
  line-height: 18px;
}
.tabs a {
  padding: 0 8px;
}
.tabs .active {
  padding: 0 9px;
  background: linear-gradient(#fff, #e8e8e8);
  color: #333;
  border-radius: 2px 2px 0 0;
}
.tabs button {
  margin-left: 22px;
}

/* ribbon */
.ribbon {
  display: flex;
  height: 95px;
  flex: none;
  background: linear-gradient(#d2d2d2, #8e8e8e);
  border-bottom: 2px solid #777;
  font-family: "Open Sans", "Noto Sans", sans-serif;
  font-size: 12px;
  line-height: 15px;
  color: #3a3a3a;
}
.panel {
  display: flex;
  flex-direction: column;
  flex: none;
  border-right: 1px solid #b5b5b5;
  background: #fdfdfd;
}
.panel h2 {
  display: flex;
  align-items: center;
  justify-content: center;
  gap: 7px;
  height: 18px;
  font-size: 12px;
  background: #efefef;
  border-top: 1px solid #e0e0e0;
}
.panel h2 .tri {
  border-width: 5px 4px 0;
}
.tools {
  flex: 1;
  display: grid;
  align-items: start;
  padding-top: 4px;
}
.skizze {
  width: 69px;
}
.skizze .tools {
  grid-template-columns: 58px 8px;
}
.skizze .corner {
  margin-top: 52px;
}
.erstellen {
  width: 330px;
}
.erstellen .tools {
  padding-left: 2px;
  grid-template-columns: 40px 40px 50px 121px auto;
}
.aendern {
  width: 438px;
}
.aendern .tools {
  grid-template-columns: 84px 80px 60px 103px auto;
}
.arbeit {
  width: 133px;
}
.arbeit .tools {
  grid-template-columns: 56px auto;
}
.muster {
  width: 94px;
}
.muster .tools {
  padding-left: 3px;
}
.dialogfeld {
  width: 91px;
}
.abwicklung {
  width: 73px;
}
.big {
  position: relative;
  display: flex;
  flex-direction: column;
  align-items: center;
  white-space: nowrap;
}
.big svg {
  margin-bottom: 5px;
}
.big span {
  position: relative;
}
.big .tri {
  margin-top: 3px;
}
.marker {
  position: absolute;
  pointer-events: none;
  mix-blend-mode: multiply;
}
.big.marked .marker {
  left: -2px;
  top: -3px;
  width: 54px;
  height: 80px;
}
.list {
  display: flex;
  flex-direction: column;
  gap: 8px;
  padding: 2px 0 0 4px;
}
.list button {
  display: flex;
  align-items: center;
  gap: 5px;
  height: 16px;
  white-space: nowrap;
}
.list .tri {
  margin-left: 3px;
}

/* model browser */
.work {
  flex: 1;
  min-height: 0;
  display: flex;
}
.browser {
  width: 240px;
  flex: none;
  display: flex;
  flex-direction: column;
  background: #efefef;
  border-right: 2px solid #77797c;
  padding-right: 3px;
}
.grip {
  display: flex;
  align-items: center;
  gap: 5px;
  height: 16px;
}
.grip span {
  flex: 1;
  height: 5px;
  border: 1px solid #aaa;
  border-left: 0;
}
.grip button {
  width: 12px;
  font-size: 14px;
  line-height: 12px;
  font-weight: bold;
}
.browser-title {
  display: flex;
  align-items: center;
  gap: 4px;
  height: 21px;
  padding: 0 4px 0 3px;
  background: #a9a9a9;
  color: #fff;
  font-size: 12px;
}
.browser-title .tri {
  border-width: 5px 4px 0;
  border-top-color: #fff;
}
.browser-title button {
  margin-left: auto;
}
.browser-tools {
  display: flex;
  align-items: center;
  height: 27px;
  padding-bottom: 3px;
}
.browser-tools button + button {
  margin-left: 7px;
  padding-left: 9px;
  border-left: 1px solid #888;
}
.tree {
  flex: 1;
  min-height: 0;
  border: 1px solid #666;
  border-left: 0;
  background: #fff;
}
.tree ul {
  list-style: none;
}
.tree ul ul {
  margin-left: 19px;
}
.tree li {
  background: linear-gradient(#888, #888) 4px 0 / 1px 100% no-repeat;
}
.tree li:last-child {
  background-size: 1px 9px;
}
.row {
  display: flex;
  align-items: center;
  gap: 2px;
  height: 18px;
  white-space: nowrap;
}
.root {
  padding-left: 1px;
}
.root, .tree .shade {
  background-color: #efefef;
}
.dim {
  color: #808080;
}
.node {
  width: 18px;
  height: 18px;
  display: flex;
  align-items: center;
  background: linear-gradient(#888, #888) 4px 9px / 11px 1px no-repeat;
}
.node button {
  width: 9px;
  height: 9px;
  border: 1px solid #777;
  background: #fff;
  color: #000;
  font-size: 9px;
  line-height: 7px;
}

/* 3D view */
.viewport {
  position: relative;
  flex: 1;
  overflow: hidden;
  background: linear-gradient(#336499, #426c9f 18%, #6283ab 42%, #8b9cb4 65%, #acb4bd 85%, #bcbcbc);
}
.scene {
  width: 100%;
  height: 100%;
}
.dim-text {
  font: bold 12px "Noto Sans", sans-serif;
  fill: #22383c;
}
.faint {
  font-weight: normal;
  fill: #3c463e;
}
.axis-text {
  font: 11px "Liberation Sans", sans-serif;
}
.axis-text.small {
  font-size: 9px;
}

/* floating dialog */
.dialog {
  position: absolute;
  top: 33px;
  right: 102px;
  width: 399px;
  padding: 0 6px 6px;
  border: 1px solid #1c2c3c;
  border-radius: 6px;
  background: linear-gradient(100deg, #8fa3b6, #5a7a9c 45%, #7088a2 75%, #8c98a4) top / 100% 60px no-repeat, linear-gradient(#7088a2, #97a0a0);
  box-shadow: inset 0 0 0 1px #b8c6d0, 0 1px 6px rgba(0, 0, 0, .5);
}
.dialog header {
  display: flex;
  justify-content: space-between;
  height: 28px;
}
.dialog h1 {
  font-size: 12px;
  line-height: 28px;
  text-shadow: 0 0 6px #c8d8e4, 0 0 6px #c8d8e4;
}
.close {
  width: 48px;
  height: 19px;
  display: flex;
  align-items: center;
  justify-content: center;
  border: 1px solid #c0ccd4;
  border-top: 0;
  border-radius: 0 0 5px 5px;
}
.dialog-body {
  padding: 7px 4px 20px 5px;
  border: 1px solid #20303c;
  outline: 1px solid #b8c6d0;
  background: #f0f0f0;
}
.dtabs {
  display: flex;
  align-items: flex-end;
}
.dtabs button {
  height: 18px;
  padding: 0 3px;
  border: 1px solid #8c8e91;
  border-bottom: 0;
  background: linear-gradient(#f4f4f4, #dcdcdc);
}
.dtabs button + button {
  border-left: 0;
}
.dtabs button:last-child {
  padding-right: 12px;
}
.dtabs .active {
  height: 21px;
  margin-bottom: -1px;
  padding: 0 12px 2px 6px;
  background: #fff;
}
.page {
  display: grid;
  grid-template-columns: 203px 133px;
  gap: 14px;
  padding: 9px 11px 36px;
  border: 1px solid #8c8e91;
  background: #fff;
}
legend {
  margin-left: 5px;
  padding: 0 3px;
}
.profile {
  display: flex;
  align-items: center;
  gap: 10px;
  padding: 7px 0 10px 34px;
}
.tool {
  width: 24px;
  height: 24px;
  display: inline-flex;
  align-items: center;
  justify-content: center;
  border: 1px solid #777;
  border-radius: 3px;
  background: linear-gradient(#f4f4f4, #dadada);
}
.tool.on {
  border-color: #2c628b;
  background: linear-gradient(#d8eefa, #8cc4e4);
}
.tool.off {
  border-color: #b8b8b8;
  background: #f4f4f4;
}
.tool.off svg {
  opacity: .7;
}
.edges {
  display: flex;
  align-items: flex-end;
  gap: 2px;
  padding-left: 6px;
}
.side-tools {
  display: flex;
  flex-direction: column;
  gap: 3px;
}
.edges table {
  width: 158px;
  height: 68px;
  padding: 1px;
  border: 1px solid #828790;
  border-spacing: 0;
  background: #fff;
}
.edges th {
  height: 24px;
  padding: 1px 5px 0;
  border-bottom: 1px solid #d0d4d8;
  border-right: 1px solid #e2e4e8;
  background: linear-gradient(#fff 50%, #f3f4f6);
  font-weight: normal;
  text-align: left;
}
.edges td {
  padding: 2px 0 0 5px;
  white-space: nowrap;
  vertical-align: top;
}
.edges .hint {
  padding-top: 0;
}
.edges td[rowspan] {
  width: 17px;
  padding: 0 0 0 3px;
}
.picked {
  color: #3399ff;
}
.hint {
  color: #6d6d6d;
}
.modes {
  display: flex;
  gap: 6px;
  padding: 8px 0 19px 39px;
}
.radius {
  display: flex;
  flex-direction: column;
  justify-content: flex-end;
}
.field {
  position: relative;
  display: flex;
  height: 20px;
  border: 1px solid #d0d4d8;
  border-top-color: #999;
  background: #fff;
}
.field input {
  flex: 1;
  width: 0;
  padding: 0 4px;
  border: 0;
  background: none;
}
.field button {
  width: 15px;
  display: flex;
  align-items: center;
  justify-content: center;
  background: #f0f0f0;
}
.radius .field {
  margin: 6px 0 15px;
}
.extend {
  padding: 8px 0 12px 6px;
}
.extend legend {
  margin-left: -1px;
}
.extend .tool {
  vertical-align: top;
}
.actions {
  display: flex;
  justify-content: space-between;
  padding: 13px 12px 13px 3px;
}
.actions div {
  display: flex;
  gap: 8px;
  margin-right: 47px;
}
.actions button {
  width: 73px;
  height: 21px;
  border: 1px solid #707070;
  border-radius: 3px;
  background: linear-gradient(#f2f2f2 50%, #dcdcdc 50%, #cfcfcf);
}
.actions .sq {
  width: 23px;
  display: flex;
  align-items: center;
  justify-content: center;
}
hr {
  margin: 0 12px 6px 0;
  border: 0;
  border-top: 1px solid #a0a0a0;
}
.width-box {
  width: 231px;
  margin-left: 3px;
  padding: 3px 10px 7px 9px;
  border-color: #dcdcdc;
}
.width-box legend {
  margin-left: -6px;
}
.width-box > label {
  display: block;
}
.type {
  display: block;
  margin-top: 3px;
}
.type select {
  display: block;
  height: 21px;
  padding: 0 3px;
  border: 1px solid #707070;
  border-radius: 3px;
  background: linear-gradient(#f4f400, #e6e600) 0 1px / 123px 17px no-repeat, linear-gradient(#f2f2f2 50%, #dcdcdc 50%, #cfcfcf);
}
.options {
  display: grid;
  grid-template-columns: 98px 1fr;
  padding: 7px 0 17px;
}
.radios {
  display: flex;
  flex-direction: column;
  gap: 7px;
  padding-top: 1px;
}
.radios label {
  display: flex;
  align-items: center;
  gap: 4px;
}
.radios input {
  appearance: none;
  width: 12px;
  height: 12px;
  border: 1px solid #8e8f8f;
  border-radius: 50%;
  background: radial-gradient(#ddd, #fff);
}
.radios input:checked {
  background: radial-gradient(#4ab8e0, #123c5a 3px, #f4f4f4 4px);
}
.breite .field {
  margin-top: 2px;
}
.breite .field input {
  padding-left: 6px;
}
.field .marker {
  left: -8px;
  top: -2px;
  width: 68px;
  height: 22px;
}
.offset {
  display: flex;
  align-items: flex-start;
}
.offset .tool {
  height: 26px;
  width: 27px;
}
.offset .tool + .field {
  width: 128px;
  margin-left: 3px;
}
.offset .tool:last-child {
  width: 22px;
  height: 22px;
  margin-left: auto;
}
.field.off {
  border-color: #aaa;
  background: #c8c8c8;
}
.field.off input {
  color: #808080;
}
.field.off .tri {
  border-left-color: #777;
}
```
